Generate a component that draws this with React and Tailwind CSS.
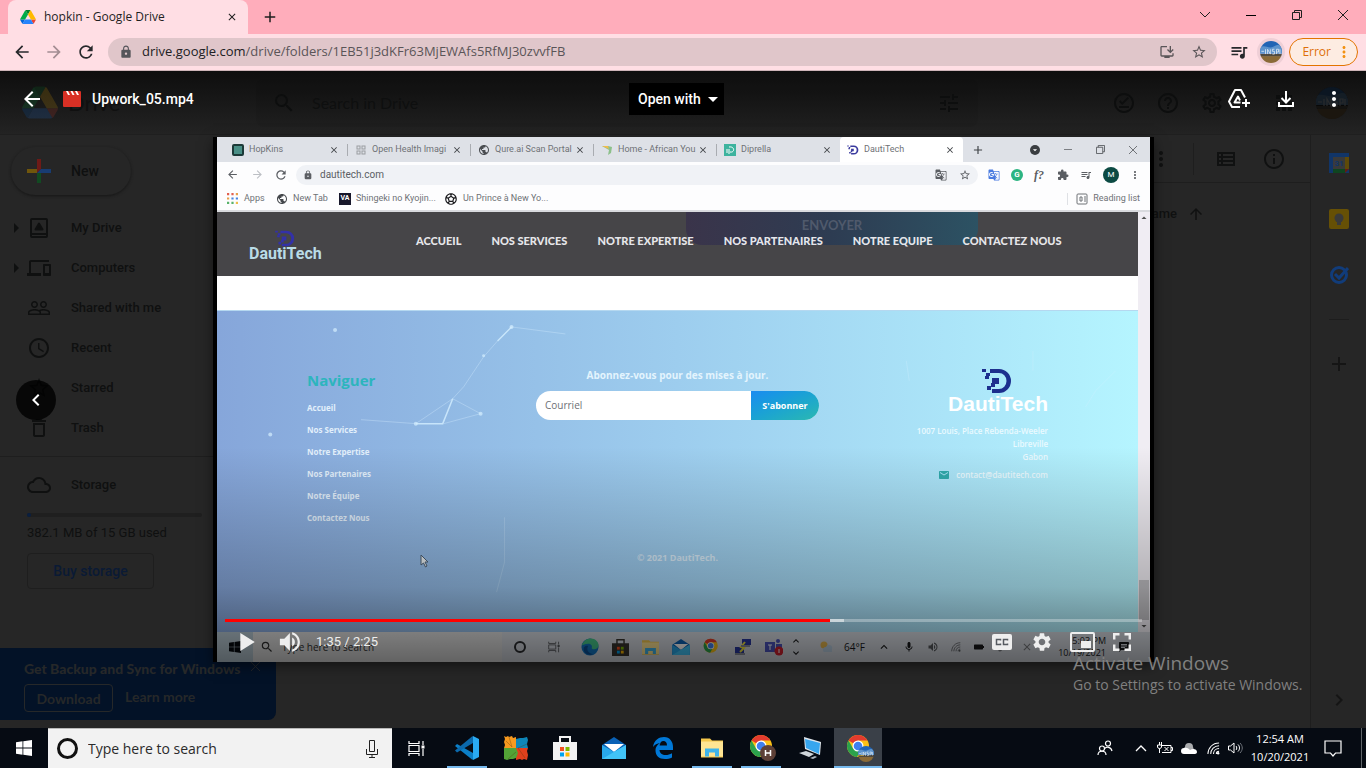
import React from "react";
import {
  MdArrowBack, MdArrowForward, MdRefresh, MdLock, MdStarBorder, MdQueueMusic, MdMoreVert, MdSearch, MdTune,
  MdOutlineSettings, MdHelpOutline, MdApps, MdOutlineDevices, MdPeopleOutline, MdAccessTime, MdDeleteOutline,
  MdCloudQueue, MdInfoOutline, MdArrowUpward, MdAdd, MdChevronRight, MdChevronLeft, MdClose, MdSettings,
  MdOutlineOfflinePin, MdArrowRight, MdArrowDropDown, MdExtension, MdGTranslate, MdPublic, MdSportsSoccer,
  MdExpandMore, MdExpandLess, MdMic, MdVolumeUp, MdBatteryFull, MdEmail, MdChat, MdOutlineInstallDesktop,
  MdOutlineViewList, MdArrowDropUp, MdOutlineGridView, MdBrush,
} from "react-icons/md";

const SEGOE = "font-['Open_Sans','Noto_Sans',sans-serif]";

/* ---------- drawings ---------- */

function DriveLogo({ className }) {
  return (
    <svg viewBox="0 0 87.3 78" className={className} aria-hidden="true">
      <path d="m6.6 66.85 3.85 6.65c.8 1.4 1.95 2.5 3.3 3.3l13.75-23.8h-27.5c0 1.55.4 3.1 1.2 4.5z" fill="#0066da" />
      <path d="m43.65 25-13.75-23.8c-1.35.8-2.5 1.9-3.3 3.3l-25.4 44a9.06 9.06 0 0 0-1.2 4.5h27.5z" fill="#00ac47" />
      <path d="m73.55 76.8c1.35-.8 2.5-1.9 3.3-3.3l1.6-2.75 7.65-13.25c.8-1.4 1.2-2.95 1.2-4.5h-27.502l5.852 11.5z" fill="#ea4335" />
      <path d="m43.65 25 13.75-23.8c-1.35-.8-2.9-1.2-4.5-1.2h-18.5c-1.6 0-3.15.45-4.5 1.2z" fill="#00832d" />
      <path d="m59.8 53h-32.3l-13.75 23.8c1.35.8 2.9 1.2 4.5 1.2h50.8c1.6 0 3.15-.45 4.5-1.2z" fill="#2684fc" />
      <path d="m73.4 26.5-12.7-22c-.8-1.4-1.95-2.5-3.3-3.3l-13.75 23.8 16.15 28h27.45c0-1.55-.4-3.1-1.2-4.5z" fill="#ffba00" />
    </svg>
  );
}

function Avatar({ className }) {
  return (
    <svg viewBox="0 0 32 32" className={className} aria-hidden="true">
      <clipPath id="avatar-disc"><circle cx="16" cy="16" r="16" /></clipPath>
      <g clipPath="url(#avatar-disc)">
        <path d="M0 0h32v18H0z" fill="#2164b4" />
        <path d="M0 9c8-4 12 3 20-1s9-1 12 0v10H0z" fill="#5c93cc" />
        <path d="M0 19h32v4H0z" fill="#514a3e" />
        <path d="M0 22h32v10H0z" fill="#8a6a37" />
        <path d="M2 15h4M8 12v7M11 19v-7l4 7v-7M21 12h-3v3h3v4h-3M24 19v-7h3v4h-3M29 12v7" stroke="#dfe9f3" strokeWidth="1.200" fill="none" />
      </g>
    </svg>
  );
}

function ChromeLogo({ className, children }) {
  return (
    <svg viewBox="0 0 28 28" className={className} aria-hidden="true">
      <circle cx="12" cy="12" r="11" fill="#fbc116" />
      <path d="M12 12 2.5 6.5A11 11 0 0 1 21.5 6.5H12z" fill="#e33b2e" />
      <path d="M2.5 6.5A11 11 0 0 0 11 23l5.5-9.500L7.200 14.700z" fill="#2ba24c" />
      <circle cx="12" cy="12" r="5.500" fill="#fff" />
      <circle cx="12" cy="12" r="4.300" fill="#3f80ee" />
      {children}
    </svg>
  );
}

function WindowsLogo({ className }) {
  return (
    <svg viewBox="0 0 16 16" className={className} fill="currentColor" aria-hidden="true">
      <path d="M0 2.200 6.500 1.300v6.200H0zM7.300 1.200 16 0v7.500H7.300zM0 8.400h6.500v6.300L0 13.800zM7.300 8.400H16V16l-8.700-1.200z" />
    </svg>
  );
}

function TaskView({ className }) {
  return (
    <svg viewBox="0 0 17 17" className={className} fill="none" stroke="currentColor" strokeWidth="1.200" aria-hidden="true">
      <path d="M1 1v2.500h10V1M1 16v-2.500h10V16M1 5.500h10v6H1zM15 1v4M15 9v7" />
      <path d="M13.500 5.500h3v3h-3z" fill="currentColor" stroke="none" />
    </svg>
  );
}

function DautiMark({ className }) {
  return (
    <svg viewBox="0 0 30 26" className={className} fill="currentColor" aria-hidden="true">
      <path d="M8 1h9a12 12 0 0 1 0 24H10v-4h7a7.500 8 0 0 0 0-16H8v3H4V5h4z" />
      <path d="M0 1h4v3H0zM3 8h4v3H3zM10 10h7v6h-4v3H9v3H5v-4h4v-3h1z" />
    </svg>
  );
}

function EdgeOld({ className }) {
  return (
    <svg viewBox="0 0 20 22" className={className} aria-hidden="true">
      <path d="M0 10C1 3 6 0 11 0c6 0 9 5 9 10v3H6.500c0 3 3 5 6 5 2.500 0 4.500-.600 6.500-1.800v4.300C17 21.600 14.500 22 12 22 6 22 2.500 18.500 2.500 13.500c0-4 2.500-6.500 5-7.500C4 6.200 1.500 8 0 10zm6.600-1.500h7.400c0-3-1.300-4.500-3.600-4.500S7 6 6.600 8.500z" fill="#0078d7" />
    </svg>
  );
}

function EdgeNew({ className }) {
  return (
    <svg viewBox="0 0 20 20" className={className} aria-hidden="true">
      <circle cx="10" cy="10" r="9.500" fill="#1277c4" />
      <path d="M1 8C3 2 8 .5 11 .5c5 0 8.500 4 8.500 7.500 0 3-2.500 4.500-5 4.500-2 0-3-.800-2.500-2 .8-2-1-4-4-4-3.500 0-6 1.500-7 1.500z" fill="#46c98c" />
      <path d="M8 9c-2 3-1 8 5 9-5 2-10-1-10-6 0-2 2-4 5-3z" fill="#0c4f96" />
    </svg>
  );
}

function Folder({ className }) {
  return (
    <svg viewBox="0 0 22 19" className={className} aria-hidden="true">
      <path d="M0 0h9l2 2h11v17H0z" fill="#f5c84c" />
      <path d="M0 3h22v15H0z" fill="#ffe593" />
      <path d="M4 18v-8h14v8h-4v-4H8v4z" fill="#3fb4ea" />
    </svg>
  );
}

function Mail({ className }) {
  return (
    <svg viewBox="0 0 24 22" className={className} aria-hidden="true">
      <path d="M0 8 12 0l12 8v14H0z" fill="#0a61b5" />
      <path d="M2 7h20L12 15z" fill="#fff" />
      <path d="M0 8l12 7 12-7v14H0z" fill="#28a8ea" />
      <path d="M24 8v14H0z" fill="#41c4f7" />
    </svg>
  );
}

function StoreBag({ className, body = "#f3f3f3" }) {
  return (
    <svg viewBox="0 0 24 24" className={className} aria-hidden="true">
      <path d="M7 7V1h10v6" fill="none" stroke={body} strokeWidth="2" />
      <path d="M0 6h24v18H0z" fill={body} />
      <path d="M7 11h4v4H7z" fill="#f25022" /><path d="M12.500 11h4v4h-4z" fill="#7fba00" />
      <path d="M7 16.500h4v4H7z" fill="#00a4ef" /><path d="M12.500 16.500h4v4h-4z" fill="#ffb900" />
    </svg>
  );
}

function VsCode({ className }) {
  return (
    <svg viewBox="0 0 24 24" className={className} aria-hidden="true">
      <path d="M2 8 0 10l17 13.500 1-.500v-6z" fill="#0b7fc7" />
      <path d="M0 14.500 2 16.500 18 7V1L17 .5z" fill="#0b69ac" />
      <path d="M17 .2 18 0l6 3v18l-6 3-1-.2c.6.200 1-.3 1-.8V1c0-.5-.4-1-1-.8z" fill="#2aaaf2" />
    </svg>
  );
}

function Avg({ className }) {
  return (
    <svg viewBox="0 0 24 24" className={className} aria-hidden="true">
      <path d="M0 0l2 1 2-1 1 1 3-1 1 2 3-1 0 11H0l1-3-1-3 1-3z" fill="#f79a1f" />
      <path d="M12 3l4-1 3 0 4-1 1 3-1 4 1 4H12z" fill="#0e86b8" />
      <path d="M12 12h12l-1 3 1 4-1 5-3-1-2 1-2-1-4 1z" fill="#e1401c" />
      <path d="M0 12h12l2 5-2 5-3 1-3 0-3 1-3-1 0-4z" fill="#53a436" />
      <path d="M5 1l3 10M2 5l6 6M23 8l-9 4M14 12l7 10M4 23l8-7" stroke="#5c3a0c" strokeWidth=".6" opacity=".6" />
    </svg>
  );
}

function RemotePc({ className }) {
  return (
    <svg viewBox="0 0 24 22" className={className} aria-hidden="true">
      <path d="M6 0l17 5-1 13L7 12z" fill="#dfe6ec" />
      <path d="M7 2l15 4-1 11L8 11z" fill="#37a6ee" />
      <path d="M1 16l7-2 8 3-5 3z" fill="#cfd5da" />
      <path d="M12 21l5-2 2 1-4 2z" fill="#aeb7bf" />
    </svg>
  );
}

function Wifi({ className }) {
  return (
    <svg viewBox="0 0 14 14" className={className} fill="none" stroke="currentColor" strokeWidth="1.100" aria-hidden="true">
      <path d="M1 13C1 6.500 6 1 13 1M4 13c0-5 4-9 9-9M7 13c0-3.500 2.500-6 6-6M10 13c0-2 1-3 3-3" />
      <circle cx="12" cy="12.200" r="1.300" fill="currentColor" stroke="none" />
    </svg>
  );
}

function Restore({ className }) {
  return (
    <svg viewBox="0 0 10 10" className={className} fill="none" stroke="currentColor" aria-hidden="true">
      <path d="M.5 2.500h7v7h-7zM2.500 2.500v-2h7v7h-2" />
    </svg>
  );
}

function Cross({ className }) {
  return (
    <svg viewBox="0 0 10 10" className={className} stroke="currentColor" aria-hidden="true"><path d="M0 0l10 10M10 0 0 10" /></svg>
  );
}

/* ---------- host browser ---------- */

function TabStrip() {
  return (
    <div className="flex h-[34px] items-stretch bg-[#ffadbb] pl-2 text-[#1f1f1f]">
      <div className="flex w-60 items-center rounded-t-lg bg-[#ffdee4] pr-[10px] pl-3">
        <DriveLogo className="h-[14px] w-4" />
        <span className="ml-2 flex-1 whitespace-nowrap text-[12px]">hopkin - Google Drive</span>
        <button aria-label="Close tab"><MdClose className="size-3" /></button>
      </div>
      <button aria-label="New tab" className="ml-3 grid w-5 place-items-center"><MdAdd className="size-[18px]" /></button>
      <div className="ml-auto flex items-center pb-1">
        <button aria-label="Search tabs" className="grid w-[46px] place-items-center"><svg viewBox="0 0 10 6" className="h-[6px] w-[10px]" fill="none" stroke="currentColor"><path d="M0 0l5 5 5-5" /></svg></button>
        <button aria-label="Minimize" className="grid h-5 w-[46px] place-items-center"><span className="h-px w-[10px] bg-black" /></button>
        <button aria-label="Restore" className="grid w-[46px] place-items-center"><Restore className="size-[10px]" /></button>
        <button aria-label="Close window" className="grid w-[46px] place-items-center"><Cross className="size-[10px]" /></button>
      </div>
    </div>
  );
}

function AddressBar() {
  return (
    <div className="flex h-[37px] items-center border-b border-[#cdb4b8] bg-[#ffdee4] pr-2 pl-3 text-[#27282b]">
      <button aria-label="Back" className="mr-3"><MdArrowBack className="size-5" /></button>
      <button aria-label="Forward" className="mr-3 text-[#a38d92]"><MdArrowForward className="size-5" /></button>
      <button aria-label="Reload"><MdRefresh className="size-5" /></button>
      <div className="mr-3 ml-3 flex h-7 flex-1 items-center rounded-full bg-[#e0c6ca] pr-[10px] pl-[11px] text-[#5a5558]">
        <MdLock className="size-[14px] text-[#55555a]" />
        <p className="ml-[9px] flex-1 text-[13px] whitespace-nowrap"><span className="text-[#202124]">drive.google.com</span>/drive/folders/1EB51j3dKFr63MjEWAfs5RfMJ30zvvfFB</p>
        <button aria-label="Install app" className="mr-4"><MdOutlineInstallDesktop className="size-4" /></button>
        <button aria-label="Bookmark this tab"><MdStarBorder className="size-4" /></button>
      </div>
      <button aria-label="Media controls" className="mr-2"><MdQueueMusic className="size-5" /></button>
      <button aria-label="Profile" className="mr-1 rounded-full bg-[#efcfd6] p-[3px]"><Avatar className="size-[22px]" /></button>
      <button className="flex h-7 items-center rounded-full border border-[#e37400] bg-[#fdece2] pr-1 pl-3 text-[12px] text-[#dd6f08]">
        Error<MdMoreVert className="ml-1 size-[18px] text-[#f29111]" />
      </button>
    </div>
  );
}

/* ---------- Drive page, dimmed behind the player ---------- */

function DriveHeader() {
  return (
    <header className="flex h-16 items-center border-b border-[#1f1f1f] bg-linear-to-b from-[#0e0e0e] to-[#232323] pr-[18px] pl-[22px] text-[#0d0e0e]">
      <DriveLogo className="h-[33px] w-9 opacity-15" />
      <span className="ml-[10px] w-[188px] font-[Lato,sans-serif] text-[22px] text-[#101010]">Drive</span>
      <form className="flex h-12 w-[722px] items-center rounded-lg bg-black/5 pr-[17px] pl-4">
        <button type="button" aria-label="Search"><MdSearch className="size-6" /></button>
        <input aria-label="Search in Drive" placeholder="Search in Drive" className="ml-4 flex-1 bg-transparent font-[Lato,sans-serif] text-[16px] placeholder:text-[#0e0f0f]" />
        <button type="button" aria-label="Search options"><MdTune className="size-6" /></button>
      </form>
      <div className="ml-auto flex items-center gap-5">
        <button aria-label="Ready for offline"><MdOutlineOfflinePin className="size-6" /></button>
        <button aria-label="Support"><MdHelpOutline className="size-6" /></button>
        <button aria-label="Settings"><MdOutlineSettings className="size-6" /></button>
        <button aria-label="Google apps" className="ml-7"><MdApps className="size-6" /></button>
        <button aria-label="Google Account" className="rounded-full bg-[#080808]"><Avatar className="size-8 opacity-15" /></button>
      </div>
    </header>
  );
}

function DriveFileIcon({ className }) {
  return (
    <svg viewBox="0 0 24 24" className={className} fill="none" stroke="currentColor" strokeWidth="2" aria-hidden="true">
      <rect x="4" y="3" width="16" height="18" rx="1" /><path d="M4 18h16" />
      <path d="M12 7.500l3.500 6h-7z" fill="currentColor" strokeLinejoin="round" />
    </svg>
  );
}

const NAV = [
  { label: "My Drive", Icon: DriveFileIcon, tree: true },
  { label: "Computers", Icon: MdOutlineDevices, tree: true },
  { label: "Shared with me", Icon: MdPeopleOutline },
  { label: "Recent", Icon: MdAccessTime },
  { label: "Starred", Icon: MdStarBorder },
  { label: "Trash", Icon: MdDeleteOutline },
];

function Sidebar() {
  return (
    <aside className="w-[256px] text-[#0f1010]">
      <button className="mt-3 ml-[11px] flex h-12 w-[120px] items-center rounded-full pl-4 shadow-[0_1px_3px_#161616]">
        <svg viewBox="0 0 24 24" className="size-6" aria-hidden="true">
          <path d="M10 0h4v10l-4 4z" fill="#6e1a17" /><path d="M14 10h10v4H10z" fill="#183c72" />
          <path d="M10 14h4v10h-4z" fill="#124a22" /><path d="M0 10h10v4H0z" fill="#70560c" />
        </svg>
        <span className="ml-5 text-[14px] font-medium">New</span>
      </button>
      <nav className="mt-[13px]">
        {NAV.map(({ label, Icon, tree }) => (
          <a key={label} href="#" className="flex h-10 items-center pl-1 text-[13px] font-medium">
            <span className="w-[23px]">{tree && <MdArrowRight className="size-6" />}</span>
            <Icon className="size-6" />
            <span className="ml-5">{label}</span>
          </a>
        ))}
      </nav>
      <div className="mt-2 border-t border-[#1e1e1e] pt-2">
        <a href="#" className="flex h-10 items-center pl-[27px] text-[13px] font-medium"><MdCloudQueue className="size-6" /><span className="ml-5">Storage</span></a>
        <div className="mt-2 ml-[27px] h-1 w-[175px] rounded-full bg-[#1f1f1f]"><div className="size-1 rounded-full bg-[#0a1f40]" /></div>
        <p className="mt-[6px] ml-[27px] text-[13px] leading-5">382.1 MB of 15 GB used</p>
        <button className="mt-[10px] ml-[27px] h-9 w-[127px] rounded border border-[#1e1e1e] text-[14px] font-medium text-[#0a1a35]">Buy storage</button>
      </div>
    </aside>
  );
}

function DriveMain() {
  return (
    <main className="flex-1 text-[#101111]">
      <div className="flex h-12 items-center justify-end border-b border-[#1e1e1e] pr-6">
        <button aria-label="More actions"><MdMoreVert className="size-6" /></button>
        <span className="mx-5 h-8 w-px bg-[#1e1e1e]" />
        <button aria-label="List view"><MdOutlineViewList className="size-6" /></button>
        <button aria-label="View details" className="ml-6"><MdInfoOutline className="size-6" /></button>
      </div>
      <div className="flex h-[62px] items-center justify-end pr-[105px] text-[13px] font-medium">
        Name<MdArrowUpward className="ml-[10px] size-[18px]" />
      </div>
    </main>
  );
}

function SidePanel() {
  return (
    <aside className="flex w-14 flex-col items-center border-l border-[#1e1e1e] pt-[18px] text-[#151515]">
      <button aria-label="Calendar">
        <svg viewBox="0 0 20 20" className="size-5">
          <path d="M0 0h20v20H0z" fill="#113568" /><path d="M16 4h4v12h-4z" fill="#5e4a08" /><path d="M4 16h12v4H4z" fill="#0f4520" />
          <path d="M16 16h4l-4 4z" fill="#661a13" /><path d="M4 4h12v12H4z" fill="#3a3a3a" />
          <text x="10" y="13" fontSize="8" textAnchor="middle" fill="#113568" fontWeight="700">31</text>
        </svg>
      </button>
      <button aria-label="Keep" className="mt-9">
        <svg viewBox="0 0 20 20" className="size-5">
          <rect width="20" height="20" rx="2" fill="#665005" /><circle cx="10" cy="9" r="4.500" fill="#3a3a3a" /><path d="M8 12h4v4H8z" fill="#3a3a3a" />
        </svg>
      </button>
      <button aria-label="Tasks" className="mt-9">
        <svg viewBox="0 0 20 20" className="size-5" fill="none" stroke="#113c7a"><circle cx="10" cy="10" r="7.500" strokeWidth="3" /><path d="M6 9l4 4 9-10" strokeWidth="3" /></svg>
      </button>
      <span className="mt-[34px] h-px w-5 bg-[#1d1d1d]" />
      <button aria-label="Get add-ons" className="mt-8"><MdAdd className="size-6" /></button>
      <button aria-label="Hide side panel" className="mt-auto mb-4"><MdChevronRight className="size-6" /></button>
    </aside>
  );
}

function BackupBanner() {
  return (
    <section className="absolute bottom-2 left-0 h-[72px] w-[276px] rounded-br-lg bg-[#031227] pt-[11px] pl-6 font-[Lato,sans-serif] text-[14px] font-black text-[#262829]">
      <h2 className="leading-5">Get Backup and Sync for Windows</h2>
      <Cross className="absolute top-[14px] right-4 size-[9px]" />
      <div className="mt-[5px] flex items-start gap-3">
        <button className="h-7 w-[89px] rounded border border-[#262829] font-bold">Download</button>
        <button className="h-6 font-bold">Learn more</button>
      </div>
    </section>
  );
}

/* ---------- recording shown in the player ---------- */

const REC_TABS = [
  ["HopKins", <span className="size-3 rounded-xs border-2 border-[#1c3a38] bg-[#4a8f86]" />],
  ["Open Health Imagi", <MdOutlineGridView className="size-3 text-[#9a9da1]" />],
  ["Qure.ai Scan Portal", <MdPublic className="size-3 text-[#4a4d51]" />],
  ["Home - African You", <svg viewBox="0 0 12 12" className="size-3"><path d="M1 2h6l4 1-1 6-3 2 1-5z" fill="#8cc08a" /><path d="M1 2h6l1 3z" fill="#f2bb4a" /></svg>],
  ["Diprella", <svg viewBox="0 0 12 12" className="size-3"><path d="M0 0h12v12H0z" fill="#3db39e" /><path d="M3 9V5M5 3c6-1 6 6 1 5M5 10V5" stroke="#fff" fill="none" /></svg>],
  ["DautiTech", <DautiMark className="h-[10px] w-3 text-[#3a3a9e]" />],
];

function RecordingChrome() {
  return (
    <div className="font-[Roboto,sans-serif] text-[9px] text-[#6f7276]">
      <div className="flex h-[25px] items-stretch bg-[#dee1e7] pl-2">
        {REC_TABS.map(([label, icon], i) => (
          <div key={label} className={`flex w-[123px] items-center pr-2 pl-[7px] ${i === 5 ? "rounded-t bg-white" : ""}`}>
            {icon}
            <span className="ml-[5px] whitespace-nowrap">{label}</span>
            <MdClose className="ml-auto size-[10px] shrink-0 text-[#3f4246]" />
            {i < 4 && <span className="ml-2 -mr-2 h-3 w-px bg-[#a9acb1]" />}
          </div>
        ))}
        <MdAdd className="ml-2 size-[14px] self-center text-[#3f4246]" />
        <div className="mr-[13px] ml-auto flex items-center gap-6 text-[#55585c]">
          <span className="grid size-[10px] place-items-center rounded-full bg-[#3a3d41] text-white"><MdArrowDropDown className="size-[10px]" /></span>
          <span className="h-px w-2 bg-[#7c7f84]" />
          <Restore className="size-[9px]" />
          <Cross className="size-2" />
        </div>
      </div>
      <div className="flex h-[25px] items-center bg-[#fdfdfe] px-[9px] text-[#5b5e63]">
        <MdArrowBack className="size-[13px]" />
        <MdArrowForward className="ml-3 size-[13px] text-[#bcbfc4]" />
        <MdRefresh className="ml-[10px] size-[14px]" />
        <div className="ml-2 flex h-5 flex-1 items-center rounded-full bg-[#f0f2f6] px-[7px] text-[10px]">
          <MdLock className="size-[10px]" /><span className="ml-[7px] flex-1">dautitech.com</span>
          <MdGTranslate className="mr-3 size-3" /><MdStarBorder className="size-3" />
        </div>
        <div className="ml-[10px] flex items-center gap-[11px]">
          <MdGTranslate className="size-3 text-[#4a7be0]" />
          <span className="grid size-3 place-items-center rounded-full bg-[#2cb482] text-[8px] font-bold text-white">G</span>
          <span className="w-3 font-['Liberation_Serif',serif] text-[12px] font-bold italic">f?</span>
          <MdExtension className="size-3" />
          <MdQueueMusic className="size-3" />
          <span className="grid size-4 place-items-center rounded-full bg-[#0c4a43] text-[8px] text-white">M</span>
          <MdMoreVert className="-ml-px size-3" />
        </div>
      </div>
      <div className="flex h-[25px] items-center border-b-2 border-[#d9dade] bg-[#fdfdfe] px-[10px]">
        <svg viewBox="0 0 10 10" className="size-[11px]" aria-hidden="true">
          <path d="M0 1h2M4 1h2" stroke="#e2604f" strokeWidth="2" /><path d="M8 1h2M0 5h2" stroke="#e7a04a" strokeWidth="2" />
          <path d="M4 5h2M8 5h2" stroke="#4a86e0" strokeWidth="2" /><path d="M0 9h2M4 9h2" stroke="#58b26a" strokeWidth="2" /><path d="M8 9h2" stroke="#efbc4a" strokeWidth="2" />
        </svg>
        <span className="ml-[6px] w-8">Apps</span>
        <MdPublic className="size-3 text-[#44474b]" /><span className="ml-[5px] w-[46px] whitespace-nowrap">New Tab</span>
        <span className="grid h-3 w-3 place-items-center bg-[#17172b] text-[7px] font-bold text-white">VA</span>
        <span className="ml-[5px] w-[88px] whitespace-nowrap">Shingeki no Kyojin...</span>
        <MdSportsSoccer className="size-[14px] text-[#1d1d20]" /><span className="ml-[5px] whitespace-nowrap">Un Prince à New Yo...</span>
        <span className="mr-2 ml-auto h-3 w-px bg-[#dfe1e5]" />
        <svg viewBox="0 0 12 12" className="mr-[5px] size-3" fill="none" stroke="currentColor" aria-hidden="true"><rect x="1" y="1" width="10" height="10" rx="1" /><path d="M4 4h2v4H4zM8 4h2M8 6h2M8 8h2" /></svg>
        <span>Reading list</span>
      </div>
    </div>
  );
}

const SITE_NAV = ["ACCUEIL", "NOS SERVICES", "NOTRE EXPERTISE", "NOS PARTENAIRES", "NOTRE EQUIPE", "CONTACTEZ NOUS"];
const SITE_LINKS = ["Accueil", "Nos Services", "Notre Expertise", "Nos Partenaires", "Notre Équipe", "Contactez Nous"];

function SiteHeader() {
  return (
    <header className="relative flex h-16 items-center bg-[#464548] pl-8 font-[Lato,sans-serif]">
      <div className="absolute top-0 left-[469px] h-[33px] w-[292px] rounded-b-2xl bg-linear-to-r from-[#3a344a] via-[#2d3c52] to-[#2c5263] pt-1 text-center text-[13px] font-bold text-[#505a6c]">ENVOYER</div>
      <div className="relative flex w-[167px] flex-col pt-1">
        <DautiMark className="ml-[26px] h-[17px] w-5 text-[#3331a8]" />
        <span className="-mt-px font-[Roboto,sans-serif] text-[16px] leading-4 font-bold text-[#b9dbe6]">DautiTech</span>
      </div>
      <nav className="relative flex gap-[30px] pb-[6px] text-[11px] font-black text-[#e6e6ea]">
        {SITE_NAV.map((t) => <a key={t} href="#" className="whitespace-nowrap">{t}</a>)}
      </nav>
    </header>
  );
}

function Network() {
  return (
    <svg viewBox="0 0 921 322" className="absolute inset-0 size-full" fill="none" stroke="#d5efff" aria-hidden="true">
      <path d="M294 16l-14 14M235 88l-10 25h-27" strokeWidth="1.500" opacity=".8" />
      <path d="M294 16l54 7M280 30l-14 16-20 30-11 12 28 15-37 10M198 113l37-25M198 113l-55-4" opacity=".35" />
      <path d="M287 207v45l-8 30M690 50l3 20M900 60l-20 20-10 16M817 40v20" opacity=".3" />
      <g fill="#d5efff" stroke="none" opacity=".7"><circle cx="117" cy="19" r="2" /><circle cx="52" cy="124" r="2" /><circle cx="294" cy="16" r="2" /><circle cx="263" cy="103" r="2" /><circle cx="198" cy="113" r="2" /><circle cx="266" cy="45" r="1.500" /></g>
    </svg>
  );
}

function SiteFooter() {
  return (
    <footer className="relative flex-1 border-t border-[#b5d8f0] bg-linear-to-r from-[#86a6da] via-[#9dcdee] to-[#b5f5ff] font-['Open_Sans',sans-serif]">
      <Network />
      <div className="relative grid grid-cols-[1fr_283px_1fr] px-[90px] pt-[57px]">
        <div>
          <h3 className="text-[15px] leading-6 font-bold text-[#2cb5bd]">Naviguer</h3>
          <ul className="mt-[5px] text-[8px] leading-[22px] font-bold text-[#e2effb]">
            {SITE_LINKS.map((t) => <li key={t}><a href="#">{t}</a></li>)}
          </ul>
        </div>
        <form className="text-center">
          <label htmlFor="courriel" className="block text-[10px] leading-[14px] font-bold text-[#e3f4fd]">Abonnez-vous pour des mises à jour.</label>
          <div className="mt-[9px] flex h-[29px] overflow-hidden rounded-full bg-white">
            <input id="courriel" placeholder="Courriel" className="w-[215px] pl-[9px] text-[10px] placeholder:text-[#6e7075]" />
            <button type="button" className="flex-1 bg-linear-to-br from-[#1c8bf0] to-[#2cb8b0] text-[9px] font-bold text-white">S'abonner</button>
          </div>
          <p className="mt-[132px] text-[9px] leading-3 font-bold text-white/60">© 2021 DautiTech.</p>
        </form>
        <address className="flex flex-col items-end text-[8px] leading-[13px] font-semibold text-[#eafaff] not-italic">
          <DautiMark className="mr-9 h-[26px] w-[30px] text-[#1d2f8e]" />
          <span className="font-['Liberation_Sans',sans-serif] text-[21px] leading-5 font-bold text-white">DautiTech</span>
          <span className="mt-[10px]">1007 Louis, Place Rebenda-Weeler</span>
          <span>Libreville</span>
          <span>Gabon</span>
          <span className="mt-[5px] flex items-center gap-[6px]"><MdEmail className="size-3 text-[#2fa9ac]" />contact@dautitech.com</span>
        </address>
      </div>
    </footer>
  );
}

function RecordingTaskbar() {
  return (
    <div className="flex h-[30px] items-center bg-[#d3d7de] text-[#17181a]">
      <span className="grid h-full w-[36px] place-items-center bg-[#b5c6d0]"><WindowsLogo className="size-3 text-[#04090f]" /></span>
      <span className="flex h-full w-[249px] items-center gap-2 bg-[#dcdcdc] pl-[7px] text-[10px] text-[#303030]"><MdSearch className="size-[14px]" />Type here to search</span>
      <div className="ml-3 flex items-center gap-[13px]">
        <span className="size-3 rounded-full border-2 border-[#2a2c2f]" />
        <TaskView className="mr-2 ml-[9px] size-3 text-[#55585c]" />
        <EdgeNew className="size-[18px]" />
        <StoreBag className="size-[17px]" body="#37342f" />
        <Folder className="h-[15px] w-[17px]" />
        <Mail className="h-4 w-[18px]" />
        <ChromeLogo className="size-[18px]" />
        <svg viewBox="0 0 18 18" className="size-[18px]" aria-hidden="true"><path d="M8 1h9v6H8zM1 9h9v6H1z" fill="#2938a0" /><path d="M11 4 7 9l3 1-4 4" stroke="#f2e33a" strokeWidth="2" fill="none" /><path d="M7 8h9M1 16h10" stroke="#8a8e99" strokeWidth="2" /></svg>
        <svg viewBox="0 0 18 18" className="size-[18px]" aria-hidden="true"><path d="M0 4h10v10H0zM11 6h6v8h-6z" fill="#4b53bc" /><circle cx="13" cy="3" r="2" fill="#4b53bc" /><circle cx="14" cy="13" r="4.500" fill="#d3202e" /><path d="M3 7h4M5 7v5M14 11v4" stroke="#fff" /></svg>
        <span className="-ml-[6px] flex w-3 flex-col items-center"><MdExpandLess className="size-3" /><MdExpandMore className="size-3" /></span>
      </div>
      <div className="ml-[17px] flex items-center gap-3 text-[10px]">
        <svg viewBox="0 0 14 14" className="size-[14px]" aria-hidden="true"><circle cx="5" cy="5" r="3.500" fill="#e5b64e" /><path d="M4 11a3 3 0 0 1 3-4 3 3 0 0 1 6 2v3H5z" fill="#b8cde0" /></svg>
        <span className="-ml-px">64°F</span>
        <MdExpandLess className="size-[14px]" /><MdMic className="size-3" /><MdVolumeUp className="size-3 text-[#55585c]" />
        <Wifi className="size-[10px] text-[#55585c]" /><MdBatteryFull className="size-3 rotate-90" />
        <MdBrush className="size-3 text-[#77797d]" /><MdClose className="size-3 text-[#77797d]" />
      </div>
      <div className="mr-5 ml-auto flex items-center gap-3">
        <p className="text-right text-[9px] leading-3">5:03 PM<br />10/19/2021</p>
        <MdChat className="size-3" />
      </div>
    </div>
  );
}

function PlayerControls() {
  return (
    <div className="absolute inset-x-0 bottom-0 flex h-[215px] flex-col justify-end bg-linear-to-t from-black/55 via-black/25 via-35% to-transparent px-2 text-[#eeeeee]">
      <div role="progressbar" aria-label="Seek" aria-valuenow={95} aria-valuemax={145} className="flex h-[3px] bg-white/30">
        <div className="w-[66%] bg-[#ff0000]" /><div className="w-[14px] bg-white/50" />
      </div>
      <div className="flex h-10 items-center font-[Roboto,sans-serif]">
        <button aria-label="Play" className="ml-[2px]"><svg viewBox="0 0 36 36" className="size-10" fill="currentColor"><path d="M12 26 25 18 12 10z" /></svg></button>
        <button aria-label="Mute" className="ml-1"><svg viewBox="0 0 36 36" className="size-10" fill="currentColor"><path d="M8 21h4l5 5V10l-5 5H8zM19 14v8c1.480-.680 2.500-2.230 2.500-4 0-1.740-1.020-3.260-2.500-4zm0-2.710c2.890.860 5 3.540 5 6.710s-2.110 5.850-5 6.710v2.060c4.010-.910 7-4.490 7-8.770s-2.990-7.860-7-8.770z" /></svg></button>
        <span className="ml-[5px] text-[13px]">1:35 / 2:25</span>
        <div className="ml-auto flex">
          <button aria-label="Subtitles" className="grid size-10 place-items-center">
            <svg viewBox="0 0 20 16" className="h-4 w-5"><rect width="20" height="16" rx="2" fill="currentColor" /><path d="M8.500 6.500V5.500h-4v5h4v-1M15.500 6.500V5.500h-4v5h4v-1" fill="none" stroke="#565a60" strokeWidth="1.500" /></svg>
          </button>
          <button aria-label="Settings" className="grid size-10 place-items-center"><MdSettings className="size-[22px]" /></button>
          <button aria-label="Picture in picture" className="grid size-10 place-items-center">
            <svg viewBox="0 0 25 20" className="h-5 w-[25px]"><rect x="1" y="1" width="23" height="18" rx="1" fill="none" stroke="currentColor" strokeWidth="2" /><path d="M11 9h10v7H11z" fill="currentColor" /></svg>
          </button>
          <button aria-label="Full screen" className="grid size-10 place-items-center">
            <svg viewBox="0 0 18 18" className="size-[18px]" fill="none" stroke="currentColor" strokeWidth="2.500"><path d="M1.200 6.500V1.200h5.300M11.500 1.200h5.300v5.300M16.800 11.500v5.300h-5.300M6.500 16.800H1.200v-5.300" /></svg>
          </button>
        </div>
      </div>
    </div>
  );
}

function Player() {
  return (
    <section aria-label="Upwork_05.mp4" className="relative mr-[212px] ml-[213px] h-[525px] bg-black px-1 shadow-[0_4px_12px_#00000080]">
      <div className={`relative flex h-full flex-col ${SEGOE}`}>
        <RecordingChrome />
        <div className="flex flex-1 bg-white">
          <div className="flex flex-1 flex-col">
            <SiteHeader />
            <div className="h-[34px] bg-white" />
            <SiteFooter />
          </div>
          <div className="flex w-3 flex-col items-center justify-between bg-[#f0edf3] text-[#505050]">
            <MdArrowDropUp className="size-3" />
            <div className="mt-auto h-10 w-[10px] bg-[#c0bfc3]" />
            <MdArrowDropDown className="size-3" />
          </div>
        </div>
        <RecordingTaskbar />
        <svg viewBox="0 0 9 14" className="absolute top-[417px] left-[203px] h-[14px] w-[9px]" aria-hidden="true"><path d="M1 1v10l2.500-2 2 4 1.500-1-2-4h3z" fill="#e9eef0" stroke="#4d6075" /></svg>
        <PlayerControls />
      </div>
    </section>
  );
}

function Viewer() {
  return (
    <div className="absolute inset-0 text-white">
      <header className="relative flex h-14 items-center pr-5 pl-5 text-[14px] font-medium">
        <button aria-label="Close"><MdArrowBack className="size-6" /></button>
        <svg viewBox="0 0 18 16" className="ml-[19px] h-4 w-[18px]" aria-hidden="true">
          <rect width="18" height="16" rx="1" fill="#d93025" /><path d="M3 0l2 4h2L5 0zM7.500 0l2 4h2l-2-4zM12 0l2 4h2l-2-4z" fill="#fff" />
        </svg>
        <h1 className="ml-[11px]">Upwork_05.mp4</h1>
        <button className="absolute top-3 left-1/2 ml-[-54px] flex h-8 w-[95px] items-center bg-black pl-[9px] whitespace-nowrap">Open with<MdArrowDropDown className="size-6 shrink-0" /></button>
        <div className="ml-auto flex gap-6">
          <button aria-label="Add shortcut to Drive">
            <svg viewBox="0 0 24 24" className="size-6" fill="none" stroke="currentColor" strokeWidth="2" strokeLinejoin="round"><path d="M14 20H6l-3-5.500L9 3h6l4 7.500M14.500 15.500H8.500l3.500-6 2 4M20 12v8M16 16h8" /></svg>
          </button>
          <button aria-label="Download"><svg viewBox="0 0 24 24" className="size-6" fill="none" stroke="currentColor" strokeWidth="2"><path d="M12 4v11M7.500 11l4.500 4.500 4.500-4.500M5 15v4h14v-4" /></svg></button>
          <button aria-label="More actions"><MdMoreVert className="size-6" /></button>
        </div>
      </header>
      <div className="pt-[10px]"><Player /></div>
      <button aria-label="Previous" className="absolute top-[309px] left-4 grid size-10 place-items-center rounded-full bg-black/80"><MdChevronLeft className="size-6" /></button>
      <div className={`absolute right-[57px] bottom-[33px] w-[236px] whitespace-nowrap text-[#808080] ${SEGOE}`}>
        <p className="text-[19px] leading-6">Activate Windows</p>
        <p className="text-[14px] leading-5">Go to Settings to activate Windows.</p>
      </div>
    </div>
  );
}

/* ---------- Windows taskbar ---------- */

const APPS = [
  { name: "Visual Studio Code", icon: <VsCode className="size-6" />, open: true },
  { name: "AVG", icon: <Avg className="size-6" /> },
  { name: "Microsoft Store", icon: <StoreBag className="size-6" /> },
  { name: "Mail", icon: <Mail className="h-[22px] w-6" /> },
  { name: "Edge", icon: <EdgeOld className="h-[22px] w-5" /> },
  { name: "File Explorer", icon: <Folder className="h-5 w-[22px]" />, open: true },
  { name: "Chrome, profile H", open: true, icon: <ChromeLogo className="ml-1 size-7"><circle cx="19" cy="19" r="8" fill="#5d4037" /><path d="M16.500 16v6M21.500 16v6M16.500 19h5" stroke="#fff" strokeWidth="1.500" /></ChromeLogo> },
  { name: "Remote Desktop", icon: <RemotePc className="h-[22px] w-6" /> },
];

function Taskbar() {
  return (
    <footer className={`flex h-10 items-stretch bg-[#060b13] text-white ${SEGOE}`}>
      <button aria-label="Start" className="grid w-12 place-items-center"><WindowsLogo className="size-4" /></button>
      <label className="flex w-[344px] items-center border-t border-[#b8b8b8] bg-[#f2f2f2] pr-[14px] pl-[9px]">
        <span className="size-[21px] rounded-full border-[3px] border-[#111]" />
        <input aria-label="Type here to search" placeholder="Type here to search" className="ml-[10px] min-w-0 flex-1 bg-transparent text-[14px] placeholder:text-[#2b2b2b]" />
        <svg viewBox="0 0 12 18" className="h-[18px] w-3" fill="none" stroke="#222" aria-hidden="true"><path d="M3.500.500h5v11h-5zM.5 9v5.500h11V9M6 14.500v3M3 17.500h6" /></svg>
      </label>
      <button aria-label="Task View" className="mr-[2px] grid w-12 place-items-center"><TaskView className="size-[17px]" /></button>
      {APPS.map(({ name, icon, open }) => (
        <button key={name} aria-label={name} className={`grid w-[49px] place-items-center ${open ? "border-t-2 border-b-2 border-t-transparent [border-image:linear-gradient(to_bottom,transparent_50%,#76b9ed_50%)_2] [clip-path:inset(0_4px_0_5px)]" : ""}`}>{icon}</button>
      ))}
      <button aria-label="Chrome" className="grid w-12 place-items-center border-t-2 border-b-2 border-t-[#3a4048] border-b-[#76b9ed] bg-[#3a4048]">
        <span className="relative ml-1 size-7"><ChromeLogo className="size-7" /><Avatar className="absolute right-0 bottom-0 size-4" /></span>
      </button>
      <div className="ml-auto flex items-center">
        <svg viewBox="0 0 16 16" className="mr-[22px] size-4" fill="none" stroke="currentColor" strokeWidth="1.200" aria-label="People"><circle cx="11" cy="3.500" r="2.500" /><path d="M8 8.500c1-2 6-2 7 2.500" /><circle cx="5" cy="8.500" r="2.500" /><path d="M1 15c0-5 8-5 8 0" /></svg>
        <svg viewBox="0 0 12 7" className="mr-[10px] h-[7px] w-3" fill="none" stroke="currentColor" strokeWidth="1.300" aria-label="Show hidden icons"><path d="M1 6l5-5 5 5" /></svg>
        <svg viewBox="0 0 16 12" className="mr-2 h-3 w-4" fill="none" stroke="currentColor" aria-label="Battery"><path d="M2.500 0v3M.5 3h4v2c0 2-4 2-4 0zM4.500 0v3M2.500 6.500V11M5 3.500h9v7H5M14 5.500h1.500v3H14M7.500 5l4 4M11.500 5l-4 4" /></svg>
        <svg viewBox="0 0 16 11" className="mr-[10px] h-[11px] w-4" aria-label="OneDrive"><path d="M4 4a4 4 0 0 1 8 0l1 3H2z" fill="#a9abad" /><path d="M3 11a3 3 0 0 1 0-6c3-1 5 1 6 2 3-2 7-1 7 2 0 1-1 2-2 2z" fill="#fff" /></svg>
        <Wifi className="mr-2 size-[13px]" />
        <svg viewBox="0 0 16 12" className="mr-1 h-3 w-4" fill="none" stroke="currentColor" aria-label="Volume"><path d="M.5 4h2L6 1v10L2.500 8h-2zM8 4c1 1 1 3 0 4M10 2.500c2 2 2 5 0 7" /><path d="M12 1c3 3 3 7 0 10" stroke="#70757c" /></svg>
        <p className="w-16 text-center text-[11px] leading-[18px]">12:54 AM<br />10/20/2021</p>
        <svg viewBox="0 0 18 17" className="ml-3 h-[17px] w-[18px]" fill="none" stroke="currentColor" strokeWidth="1.200" aria-label="Notifications"><path d="M1 1h16v12h-5.500L9 16l-2.500-3H1z" /></svg>
        <span className="mr-1 ml-[19px] h-10 w-px bg-[#5f6468]" />
      </div>
    </footer>
  );
}

export default function App() {
  return (
    <div className="flex min-h-screen flex-col overflow-hidden bg-[#262626]">
      <div className={SEGOE}>
        <TabStrip />
        <AddressBar />
      </div>
      <div className="relative flex flex-1 flex-col font-[Roboto,sans-serif]">
        <DriveHeader />
        <div className="flex flex-1">
          <Sidebar />
          <DriveMain />
          <SidePanel />
        </div>
        <BackupBanner />
        <Viewer />
      </div>
      <Taskbar />
    </div>
  );
}
